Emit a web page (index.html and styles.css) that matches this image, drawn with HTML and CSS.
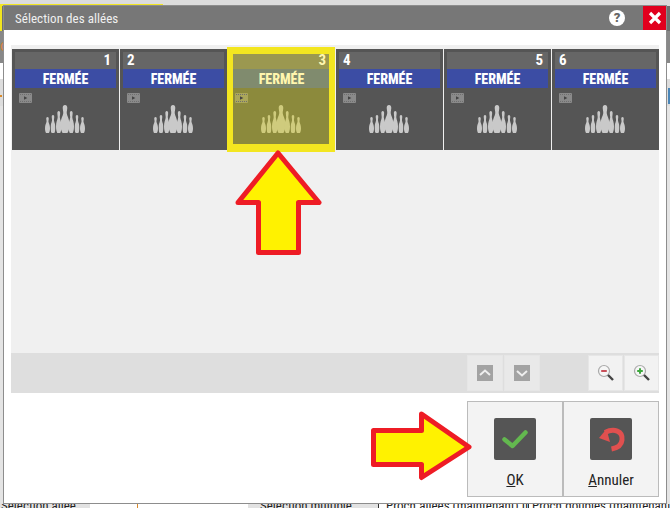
FILE: index.html
```html
<!DOCTYPE html>
<html lang="fr">
<head>
<meta charset="utf-8">
<title>Sélection des allées</title>
<link rel="stylesheet" href="styles.css">
</head>
<body>
<svg width="0" height="0" class="defs">
  <defs>
    <symbol id="pin" viewBox="0 0 8 28" preserveAspectRatio="none">
      <path d="M4 0C5.500 0 6.200 1.400 6 3.400C5.800 5.600 5.400 6.800 5.600 8.500C6 11.500 8 14 8 19.500C8 23 7.400 26 6.200 28H1.800C.6 26 0 23 0 19.500C0 14 2 11.500 2.400 8.500C2.600 6.800 2.200 5.600 2 3.400C1.800 1.400 2.500 0 4 0Z"/>
    </symbol>
    <symbol id="pins" viewBox="0 0 40 28">
      <use href="#pin" x="0" y="12" width="5" height="16"/>
      <use href="#pin" x="5.500" y="10" width="5" height="18"/>
      <use href="#pin" x="11" y="6" width="5.500" height="22"/>
      <use href="#pin" x="15.500" y="0" width="9" height="28"/>
      <use href="#pin" x="23.500" y="6" width="5.500" height="22"/>
      <use href="#pin" x="29.500" y="10" width="5" height="18"/>
      <use href="#pin" x="35" y="12" width="5" height="16"/>
    </symbol>
    <symbol id="film" viewBox="0 0 13 10">
      <rect width="13" height="10" rx="1"/>
      <path class="film-holes" d="M1 1h1v1H1zM3 1h1v1H3zM5 1h1v1H5zM7 1h1v1H7zM9 1h1v1H9zM11 1h1v1h-1zM1 8h1v1H1zM3 8h1v1H3zM5 8h1v1H5zM7 8h1v1H7zM9 8h1v1H9zM11 8h1v1h-1z"/>
      <path class="film-play" d="M5 3.200L8.400 5L5 6.800Z"/>
    </symbol>
  </defs>
</svg>

<main class="desktop">
  <div class="backdrop">
    <div class="bg-row bg-row-top"><span class="backdrop-yellow"></span></div>
    <div class="bg-row bg-row-dark"></div>
    <div class="bg-row bg-row-mid"><span class="bg-letter">C</span></div>
    <div class="bg-row bg-row-white"></div>
    <div class="bg-row bg-row-light"><span class="bg-dot"></span><span class="bg-mark"></span></div>
    <div class="bg-row bg-row-rest"></div>
    <div class="backdrop-bottom">
      <span class="bg-cell bg-a">Sélection allée</span>
      <span class="bg-cell bg-b"></span>
      <span class="bg-cell bg-b2"></span>
      <span class="bg-cell bg-b3"></span>
      <span class="bg-cell bg-c">Sélection multiple</span>
      <span class="bg-cell bg-d">Proch.allées (maintenant) II</span>
      <span class="bg-cell bg-e">Proch.doubles (maintenant)</span>
    </div>
  </div>

  <section class="dialog">
    <header class="titlebar">
      <h1 class="title">Sélection des allées</h1>
      <span class="help">?</span>
      <span class="close">
        <svg width="14" height="14" viewBox="0 0 14 14"><path d="M2 2L12 12M12 2L2 12" class="close-x"/></svg>
      </span>
    </header>

    <div class="body">
      <div class="panel">
        <div class="lanes">
          <article class="lane lane-right"><div class="lane-num">1</div><div class="lane-state">FERMÉE</div><svg class="film" width="13" height="10"><use href="#film"/></svg><svg class="pins" width="40" height="28"><use href="#pins"/></svg></article>
          <article class="lane"><div class="lane-num">2</div><div class="lane-state">FERMÉE</div><svg class="film" width="13" height="10"><use href="#film"/></svg><svg class="pins" width="40" height="28"><use href="#pins"/></svg></article>
          <article class="lane lane-right lane-picked"><div class="lane-num">3</div><div class="lane-state">FERMÉE</div><svg class="film" width="13" height="10"><use href="#film"/></svg><svg class="pins" width="40" height="28"><use href="#pins"/></svg></article>
          <article class="lane"><div class="lane-num">4</div><div class="lane-state">FERMÉE</div><svg class="film" width="13" height="10"><use href="#film"/></svg><svg class="pins" width="40" height="28"><use href="#pins"/></svg></article>
          <article class="lane lane-right"><div class="lane-num">5</div><div class="lane-state">FERMÉE</div><svg class="film" width="13" height="10"><use href="#film"/></svg><svg class="pins" width="40" height="28"><use href="#pins"/></svg></article>
          <article class="lane"><div class="lane-num">6</div><div class="lane-state">FERMÉE</div><svg class="film" width="13" height="10"><use href="#film"/></svg><svg class="pins" width="40" height="28"><use href="#pins"/></svg></article>
        </div>
        <div class="toolbar">
          <div class="tool-group">
            <button class="tool"><span class="chev"><svg width="16" height="16" viewBox="0 0 16 16"><path d="M3 10L8 5.500L13 10" class="chev-line"/></svg></span></button>
            <button class="tool"><span class="chev"><svg width="16" height="16" viewBox="0 0 16 16"><path d="M3 6L8 10.500L13 6" class="chev-line"/></svg></span></button>
          </div>
          <div class="tool-group">
            <button class="tool tool-light"><svg width="18" height="18" viewBox="0 0 18 18"><circle cx="7" cy="7" r="5.500" class="lens"/><path d="M4.200 7H9.800" class="minus"/><path d="M11 11L16 16" class="handle"/></svg></button>
            <button class="tool tool-light"><svg width="18" height="18" viewBox="0 0 18 18"><circle cx="7" cy="7" r="5.500" class="lens"/><path d="M4.200 7H9.800M7 4.200V9.800" class="plus"/><path d="M11 11L16 16" class="handle"/></svg></button>
          </div>
        </div>
      </div>

      <div class="actions">
        <button class="action">
          <span class="action-icon"><svg width="42" height="42" viewBox="0 0 42 42"><path d="M10.500 21.500L18.500 28L31.500 14.500" class="check"/></svg></span>
          <span class="action-label"><u>O</u>K</span>
        </button>
        <button class="action">
          <span class="action-icon"><svg width="42" height="42" viewBox="0 0 42 42"><path d="M15 14.500C24 10 33 13 32 22C31.500 27 27 30 21.500 31" class="undo"/><path d="M9 20L16.500 11L20 24Z" class="undo-head"/></svg></span>
          <span class="action-label"><u>A</u>nnuler</span>
        </button>
      </div>
    </div>
  </section>

  <svg class="arrow arrow-up" width="90" height="110" viewBox="0 0 90 110">
    <path d="M44 6L85 55.500H64.500V105.500H24.500V55.500H4Z" class="arrow-shape"/>
  </svg>
  <svg class="arrow arrow-right" width="106" height="80" viewBox="0 0 106 80">
    <path d="M3.500 20.500H51.500V4L99 37L51.500 67.500V54.500H3.500Z" class="arrow-shape"/>
  </svg>
</main>
</body>
</html>
```

FILE: styles.css
```css
* { box-sizing: border-box; }
html, body { margin: 0; padding: 0; }
body { background: #fff; font-family: "Roboto", "Liberation Sans", sans-serif; }
.defs { position: absolute; }
.film-holes { fill: #6f6f6f; }
.film-play { fill: #444; }

.desktop { position: relative; width: 670px; height: 508px; overflow: hidden; background: #fff; }

.backdrop { display: flex; flex-direction: column; height: 100%; }
.bg-row { flex: none; }
.bg-row-top { height: 6px; background: #dcdcdc; padding-top: 4px; }
.backdrop-yellow { display: block; width: 163px; height: 2px; background: #f2e51f; }
.bg-row-dark { height: 25px; background: #6f6f6f; border-left: 2px solid #f2e51f; }
.bg-row-mid { height: 32px; background: #888; color: #e0843c; font-size: 13px; line-height: 32px; padding-left: 0; overflow: hidden; }
.bg-letter { display: block; }
.bg-row-white { height: 16px; background: #fff; }
.bg-row-light { height: 27px; background: #ddd; display: flex; justify-content: space-between; align-items: center; }
.bg-dot { width: 2px; height: 2px; margin-top: 7px; background: #d98a2b; }
.bg-mark { width: 2px; height: 16px; margin-top: 6px; background: #4a86b8; }
.bg-row-rest { flex: 1; background: #e4e4e4; }

.backdrop-bottom { flex: none; height: 4px; display: flex; background: #fff; font-size: 13px; color: #222; font-stretch: 87.5%; }
.bg-cell { display: block; height: 4px; overflow: hidden; white-space: nowrap; line-height: 4px; flex: none; }
.bg-a { width: 90px; background: #e2e2e2; padding-left: 1px; }
.bg-b { width: 48px; border-right: 1px solid #d98a2b; }
.bg-b2 { width: 47px; }
.bg-b3 { width: 63px; }
.bg-c { width: 130px; background: #e2e2e2; padding-left: 12px; }
.bg-d { width: 150px; padding-left: 7px; border-left: 1px solid #333; font-stretch: 75%; }
.bg-e { width: 142px; padding-left: 3px; border-left: 1px solid #333; font-stretch: 75%; }

.dialog { position: absolute; left: 3px; top: 5px; width: 664px; height: 499px; background: #fff; border: 1px solid #8d8d8d; display: flex; flex-direction: column; }

.titlebar { height: 24px; flex: none; background: #777; display: flex; align-items: center; padding-left: 11px; color: #f0f0f0; }
.title { margin: 0; flex: 1; font-size: 13px; font-weight: 400; font-stretch: 75%; letter-spacing: 0.05px; }
.help { width: 16px; height: 16px; border-radius: 50%; background: #fff; color: #666; font-weight: 900; font-size: 13px; line-height: 16px; text-align: center; margin-right: 18px; }
.close { width: 23px; height: 24px; background: #e1001e; display: flex; align-items: center; justify-content: center; }
.close-x { stroke: #fff; stroke-width: 3.200; fill: none; }

.body { flex: 1; display: flex; flex-direction: column; padding: 15px 7px 0; }
.panel { height: 348px; background: #f0f0f0; display: flex; flex-direction: column; justify-content: space-between; flex: none; }
.lanes { display: flex; gap: 1px; padding: 4px 0 0 1px; }
.lane { position: relative; width: 107px; height: 101px; background: #555; padding: 3px 3px 0; color: #fff; display: flex; flex-direction: column; }
.lane-num { height: 17px; background: #666; font-weight: 700; font-size: 15px; font-stretch: 75%; line-height: 17px; padding: 0 4px; flex: none; }
.lane-right .lane-num { text-align: right; padding-right: 5px; }
.lane-picked.lane-right .lane-num { padding-right: 6px; }
.lane-state { height: 19px; background: #3c4da4; font-weight: 800; font-size: 14px; font-stretch: 75%; line-height: 21px; text-align: center; flex: none; }
.film { fill: #8a8a8a; margin: 5px 0 0 4px; display: block; flex: none; }
.pins { fill: #c9c9c9; display: block; margin: 2px 0 0 30px; flex: none; }

.lane-picked { background: #8c8a3c; color: #fff6ae; }
.lane-picked::after { content: ""; position: absolute; left: -1px; right: 0; top: -2px; bottom: -2px; border: solid #f3e620; border-width: 7px 6px 8px 6px; }
.lane-picked .lane-num { background: #9b9850; }
.lane-picked .lane-state { background: #808b6e; }
.lane-picked .film { fill: #aba75a; }
.lane-picked .pins { fill: #cfcb7d; }
.lane-picked .film-holes { fill: #9b9850; }

.toolbar { height: 40px; background: #dedede; display: flex; justify-content: space-between; padding: 2px 0 2px 456px; flex: none; }
.tool-group { display: flex; gap: 1px; }
.tool { width: 36px; height: 36px; padding: 0; border: 1px solid #e6e6e6; background: #e9e9e9; display: flex; align-items: center; justify-content: center; }
.tool-light { width: 35px; background: #f2f2f2; }
.chev { width: 16px; height: 16px; background: #a3a3a3; display: block; }
.chev svg { display: block; }
.chev-line { fill: none; stroke: #eee; stroke-width: 2; }
.lens { fill: #f6f6f6; stroke: #aaa; stroke-width: 1.200; }
.minus { stroke: #c8505a; stroke-width: 2; fill: none; }
.plus { stroke: #3ea83e; stroke-width: 2; fill: none; }
.handle { stroke: #444; stroke-width: 2.400; fill: none; }

.actions { display: flex; justify-content: flex-end; padding-top: 8px; }
.action { width: 96px; height: 96px; padding: 16px 0 0; background: #f3f3f3; border: 1px solid #bbb; display: flex; flex-direction: column; align-items: center; font-family: "Roboto", "Liberation Sans", sans-serif; }
.action-icon { width: 42px; height: 42px; background: #555; border-radius: 2px; display: block; }
.action-icon svg { display: block; }
.action-label { margin-top: 11px; font-size: 15px; font-stretch: 75%; line-height: 18px; color: #222; }
.check { fill: none; stroke: #63b84f; stroke-width: 4.500; stroke-linecap: round; stroke-linejoin: round; }
.undo { fill: none; stroke: #e0504f; stroke-width: 5; }
.undo-head { fill: #e0504f; }

.arrow { position: absolute; overflow: visible; }
.arrow-up { left: 234px; top: 147px; }
.arrow-right { left: 370px; top: 410px; }
.arrow-shape { fill: #fff200; stroke: #ee1c25; stroke-width: 5; stroke-linejoin: round; }
```
